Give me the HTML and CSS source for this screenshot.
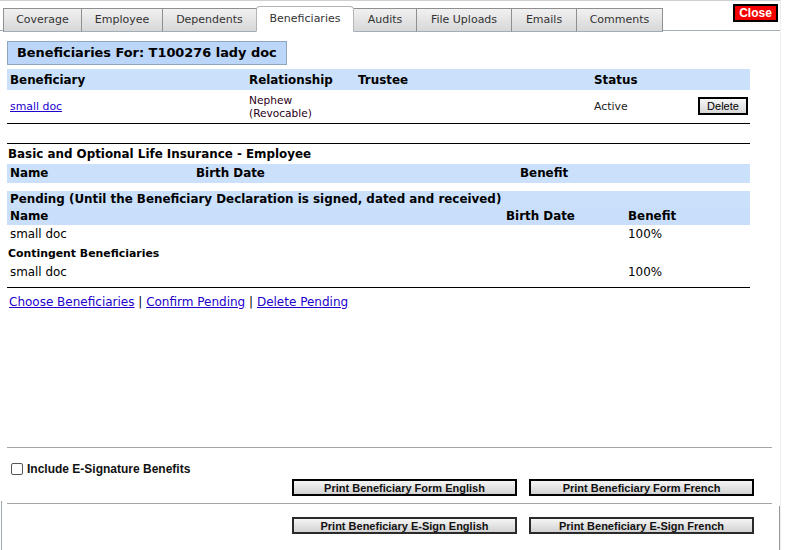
FILE: index.html
```html
<!DOCTYPE html>
<html>
<head>
<meta charset="utf-8">
<link rel="stylesheet" href="styles.css">
</head>
<body>
<div class="page">
  <div class="tabbar">
    <div class="tabs">
      <div class="tab w1">Coverage</div>
      <div class="tab w2">Employee</div>
      <div class="tab w3">Dependents</div>
      <div class="tab active w4">Beneficiaries</div>
      <div class="tab w5">Audits</div>
      <div class="tab w6">File Uploads</div>
      <div class="tab w7">Emails</div>
      <div class="tab w8">Comments</div>
    </div>
    <div class="close">Close</div>
  </div>

  <div class="content">
    <div class="heading">Beneficiaries For: T100276 lady doc</div>

    <div class="grid1 hdr">
      <div>Beneficiary</div><div>Relationship</div><div>Trustee</div><div>Status</div><div></div>
    </div>
    <div class="grid1 row1">
      <div><a href="#" class="lnk">small doc</a></div>
      <div class="rel">Nephew<br>(Revocable)</div>
      <div></div>
      <div class="status">Active</div>
      <div class="delcell"><button class="del">Delete</button></div>
    </div>

    <div class="section">
      <div class="sectitle">Basic and Optional Life Insurance - Employee</div>
      <div class="grid2 hdr">
        <div>Name</div><div>Birth Date</div><div>Benefit</div>
      </div>
      <div class="pending">Pending (Until the Beneficiary Declaration is signed, dated and received)</div>
      <div class="grid3 hdr hdr2">
        <div>Name</div><div>Birth Date</div><div>Benefit</div>
      </div>
      <div class="grid3 data">
        <div>small doc</div><div></div><div>100%</div>
      </div>
      <div class="contingent">Contingent Beneficiaries</div>
      <div class="grid3 data">
        <div>small doc</div><div></div><div>100%</div>
      </div>
    </div>

    <div class="links">
      <a href="#" class="lnk2">Choose Beneficiaries</a> | <a href="#" class="lnk2">Confirm Pending</a> | <a href="#" class="lnk2">Delete Pending</a>
    </div>
  </div>

  <div class="footer">
    <div class="rule"></div>
    <label class="chk"><span class="box"></span>Include E-Signature Benefits</label>
    <div class="btnrow">
      <button class="pbtn">Print Beneficiary Form English</button>
      <button class="pbtn">Print Beneficiary Form French</button>
    </div>
    <div class="rule rule2"></div>
    <div class="btnrow btnrow2">
      <button class="pbtn dark">Print Beneficiary E-Sign English</button>
      <button class="pbtn dark">Print Beneficiary E-Sign French</button>
    </div>
  </div>
  <div class="frame-left"></div>
  <div class="frame-right"></div>
</div>
</body>
</html>
```

FILE: styles.css
```css
html, body {
  margin: 0;
  padding: 0;
  background: #fff;
}
body {
  font-family: "DejaVu Sans", Verdana, sans-serif;
  color: #000;
  width: 785px;
  height: 550px;
  overflow: hidden;
}
.page {
  position: relative;
  width: 781px;
  height: 550px;
  border-top: 1px solid #cfcfcf;
  border-right: 1px solid #efefef;
  box-sizing: border-box;
}
.frame-left {
  position: absolute;
  left: 1px;
  top: 500px;
  width: 1px;
  height: 50px;
  background: #9ca8b4;
}
.frame-right {
  position: absolute;
  right: 0;
  top: 505px;
  width: 1px;
  height: 45px;
  background: #9a9a9a;
}
.tabbar {
  display: flex;
  align-items: flex-start;
  height: 30px;
  border-bottom: 1px solid #a3adb7;
  box-sizing: border-box;
  padding-left: 3px;
  width: 780px;
}
.tabs {
  display: flex;
  align-items: flex-end;
  height: 30px;
}
.tab {
  height: 24px;
  box-sizing: border-box;
  border: 1px solid #8f8f8f;
  border-left: none;
  background: linear-gradient(#f1f1f1, #d7d7d7);
  font-size: 11px;
  color: #333;
  display: flex;
  align-items: center;
  justify-content: center;
  margin-bottom: -1px;
  border-bottom: 1px solid #a3adb7;
  padding-bottom: 1px;
}
.tab.w1 { width: 79px; border-left: 1px solid #8f8f8f; }
.tab.w2 { width: 81px; }
.tab.w3 { width: 94px; }
.tab.w4 { width: 97px; }
.tab.w5 { width: 63px; }
.tab.w6 { width: 95px; }
.tab.w7 { width: 65px; }
.tab.w8 { width: 86px; }
.tab.active {
  background: #fff;
  height: 26px;
  border: 1px solid #b4b4b4;
  border-bottom: 1px solid #fff;
  border-radius: 4px 4px 0 0;
  margin-left: -1px;
  width: 98px;
}
.close {
  margin-left: auto;
  margin-top: 3px;
  margin-right: 2px;
  background: #f50000;
  color: #fff;
  border: 2px solid #000;
  font-family: "Liberation Sans", Arial, sans-serif;
  font-weight: bold;
  font-size: 12px;
  width: 45px;
  height: 18px;
  box-sizing: border-box;
  display: flex;
  align-items: center;
  justify-content: center;
}
.content {
  padding: 10px 0 0 7px;
  width: 743px;
}
.heading {
  display: inline-block;
  background: #bcd6f9;
  border: 1px solid #8fa4bd;
  font-weight: bold;
  font-size: 12.9px;
  padding: 0 9px;
  height: 24px;
  line-height: 22px;
  box-sizing: border-box;
  width: 280px;
  white-space: nowrap;
}
.hdr {
  background: #cae0fb;
  font-weight: bold;
  font-size: 11.9px;
}
.grid1 {
  display: grid;
  grid-template-columns: 239px 109px 236px 103px 56px;
  margin-top: 4px;
}
.grid1.hdr {
  height: 21px;
  align-items: center;
}
.grid1 > div {
  padding-left: 3px;
}
.row1 {
  margin-top: 0;
  height: 33px;
  align-items: center;
  border-bottom: 1px solid #000;
  font-size: 11px;
}
.lnk {
  color: #2200cc;
  font-size: 10.9px;
}
.rel {
  font-size: 10.6px;
  color: #2a0018;
  line-height: 13px;
  padding-top: 1px;
}
.status {
  font-size: 10.9px;
  color: #222;
}
.delcell {
  padding-left: 4px !important;
}
.del {
  font-family: "Liberation Sans", Arial, sans-serif;
  font-size: 11px;
  border: 2px solid #000;
  background: linear-gradient(#f7f7f7, #d8d8d8);
  width: 50px;
  height: 18px;
  padding: 0;
  color: #000;
  display: block;
  margin-top: -1px;
}
.section {
  margin-top: 19px;
  border-top: 1px solid #000;
  border-bottom: 1px solid #000;
  padding-bottom: 6px;
}
.sectitle {
  font-weight: bold;
  font-size: 11.9px;
  height: 20px;
  line-height: 20px;
  padding-left: 1px;
}
.grid2 {
  display: grid;
  grid-template-columns: 186px 324px 1fr;
  height: 19px;
  line-height: 19px;
}
.grid2 > div, .grid3 > div {
  padding-left: 3px;
}
.pending {
  margin-top: 8px;
  background: #cae0fb;
  font-weight: bold;
  font-size: 11.9px;
  height: 17px;
  line-height: 17px;
  padding-left: 3px;
  white-space: nowrap;
}
.grid3 {
  display: grid;
  grid-template-columns: 496px 122px 1fr;
}
.hdr2 {
  height: 17px;
  line-height: 17px;
  background: #c8defa;
}
.data {
  font-size: 11.9px;
  height: 18px;
  line-height: 18px;
}
.contingent {
  font-weight: bold;
  font-size: 10.9px;
  height: 20px;
  line-height: 22px;
  padding-left: 1px;
}
.links {
  margin-top: 7px;
  font-size: 12px;
  padding-left: 2px;
}
.lnk2 {
  color: #2200cc;
}
.footer {
  position: absolute;
  left: 0;
  top: 446px;
  width: 779px;
  padding-left: 7px;
  box-sizing: border-box;
  font-family: "Liberation Sans", Arial, sans-serif;
}
.rule {
  height: 1px;
  width: 765px;
  background: #a5a5a5;
}
.chk {
  display: flex;
  align-items: center;
  margin-top: 15px;
  margin-left: 4px;
  font-weight: bold;
  font-size: 12px;
  color: #111;
  height: 12px;
}
.box {
  width: 12px;
  height: 12px;
  border: 1px solid #555;
  border-radius: 2px;
  box-sizing: border-box;
  margin-right: 4px;
  background: #fff;
}
.btnrow {
  display: flex;
  gap: 12px;
  padding-left: 285px;
  margin-top: 4px;
  height: 17px;
}
.pbtn {
  font-family: "Liberation Sans", Arial, sans-serif;
  font-size: 11px;
  font-weight: bold;
  width: 225px;
  height: 17px;
  border: 2px solid #000;
  background: linear-gradient(#f5f5f5, #d2d2d2);
  padding: 0;
  color: #111;
}
.pbtn.dark {
  border-color: #2a2a2a;
}
.rule2 {
  margin-top: 7px;
}
.btnrow2 {
  margin-top: 13px;
}
```
